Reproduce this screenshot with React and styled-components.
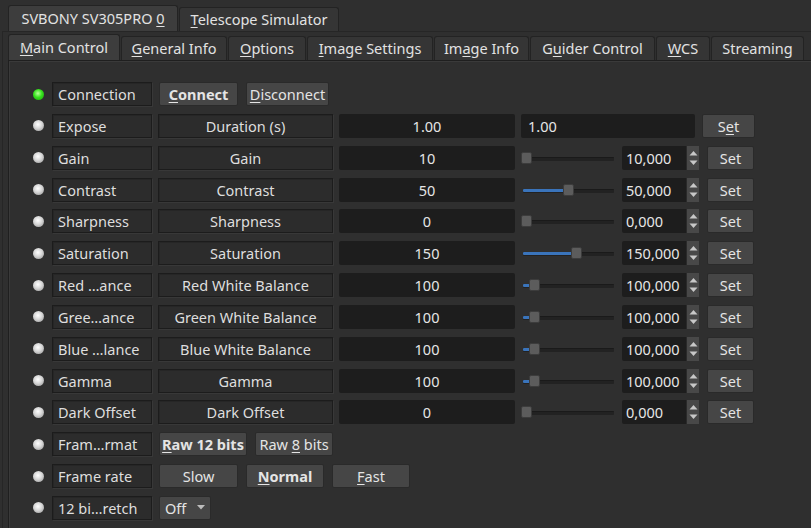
import React from 'react';
import styled, { createGlobalStyle } from 'styled-components';

const GlobalStyle = createGlobalStyle`
  html, body {
    margin: 0;
    padding: 0;
    background: #2f2f2f;
  }
  body {
    font-family: 'Noto Sans', 'Open Sans', sans-serif;
    font-size: 14.5px;
    color: #dedede;
  }
`;

const Window = styled.div`
  width: 811px;
  height: 528px;
  overflow: hidden;
  background: #2f2f2f;
  padding-top: 5px;
  box-sizing: border-box;
`;

const TabBar = styled.div`
  display: flex;
  align-items: flex-end;
  padding-left: 8px;
  height: 26px;
`;

const Tab = styled.div`
  width: ${(p) => p.$w}px;
  height: ${(p) => (p.$active ? 26 : 24)}px;
  box-sizing: border-box;
  display: flex;
  align-items: center;
  justify-content: center;
  white-space: nowrap;
  background: ${(p) => (p.$active ? '#3d3d3d' : '#353535')};
  border: 1px solid #232323;
  border-bottom: none;
  border-radius: 3px 3px 0 0;
  margin-right: 1px;
  color: #e2e2e2;
  line-height: 1;
  flex: none;
`;

const OuterPane = styled.div`
  border-left: 1px solid #262626;
  border-top: 1px solid #262626;
  margin-left: 2px;
  padding-top: 2px;
  height: 600px;
`;

const InnerTabs = styled(TabBar)`
  padding-left: 5px;
`;

const InnerPane = styled.div`
  margin-left: 5px;
  border-left: 1px solid #1f1f1f;
  border-top: 1px solid #1f1f1f;
  box-shadow: inset 1px 1px 0 #3a3a3a;
  height: 600px;
  padding: 21px 0 0 0;
`;

const Rows = styled.div`
  display: flex;
  flex-direction: column;
  gap: 7.85px;
`;

const Row = styled.div`
  display: flex;
  align-items: center;
  height: 24px;
`;

const Led = styled.span`
  width: 11px;
  height: 11px;
  border-radius: 50%;
  margin-left: 24px;
  margin-right: 8px;
  flex: none;
  background: ${(p) =>
    p.$on
      ? 'radial-gradient(circle at 45% 40%, #b8ff9a 0%, #35e21c 45%, #1a9b0c 100%)'
      : 'radial-gradient(circle at 45% 40%, #ffffff 0%, #d6d6d6 45%, #8c8c8c 100%)'};
`;

const LabelBox = styled.div`
  width: ${(p) => p.$w}px;
  height: 24px;
  box-sizing: border-box;
  border: 1px solid #1c1c1c;
  box-shadow: inset 1px 1px 0 #262626, 1px 1px 0 #383838;
  background: #2c2c2c;
  display: flex;
  align-items: center;
  justify-content: ${(p) => (p.$center ? 'center' : 'flex-start')};
  padding-left: ${(p) => (p.$center ? 0 : 5)}px;
  margin-right: ${(p) => p.$mr || 0}px;
  white-space: nowrap;
  flex: none;
`;

const Button = styled.div`
  width: ${(p) => p.$w}px;
  height: 24px;
  box-sizing: border-box;
  background: #464646;
  border: 1px solid #2a2a2a;
  border-radius: 2px;
  display: flex;
  align-items: center;
  justify-content: center;
  white-space: pre;
  font-weight: ${(p) => (p.$bold ? 700 : 400)};
  margin-left: ${(p) => p.$ml || 0}px;
  flex: none;
  color: #e4e4e4;
`;

const Field = styled.div`
  width: ${(p) => p.$w}px;
  height: 24px;
  box-sizing: border-box;
  background: #1d1d1d;
  border-radius: 2px;
  display: flex;
  align-items: center;
  justify-content: ${(p) => (p.$left ? 'flex-start' : 'center')};
  padding-left: ${(p) => (p.$left ? 7 : 0)}px;
  margin-left: ${(p) => p.$ml || 0}px;
  flex: none;
  color: #e6e6e6;
`;

const SliderWrap = styled.div`
  position: relative;
  width: 93px;
  height: 24px;
  margin-left: 6px;
  flex: none;
`;

const Groove = styled.div`
  position: absolute;
  left: 2px;
  right: 0;
  top: 11px;
  height: 3px;
  background: #222;
  border-top: 1px solid #1a1a1a;
  border-radius: 1px;
`;

const Fill = styled.div`
  position: absolute;
  left: 2px;
  top: 11px;
  height: 3px;
  background: #3a74bb;
  border-radius: 1px;
`;

const Handle = styled.div`
  position: absolute;
  top: 6px;
  width: 11px;
  height: 12px;
  background: #5c5c5c;
  border: 1px solid #3c3c3c;
  border-radius: 2px;
  box-sizing: border-box;
`;

const Spin = styled.div`
  width: 77px;
  height: 24px;
  margin-left: 8px;
  display: flex;
  background: #1d1d1d;
  border-radius: 2px;
  flex: none;
`;

const SpinText = styled.div`
  flex: 1;
  display: flex;
  align-items: center;
  padding-left: 4px;
  color: #e6e6e6;
`;

const SpinArrows = styled.div`
  width: 13px;
  background: #484848;
  border-left: 1px solid #2a2a2a;
  display: flex;
  flex-direction: column;
  align-items: center;
  justify-content: space-around;
  padding: 2px 0;
  box-sizing: border-box;
`;

const Combo = styled(Button)`
  justify-content: flex-start;
  padding-left: 5px;
  gap: 11px;
`;

const Mn = styled.span`
  text-decoration: underline;
  text-underline-offset: 2px;
`;

const Arrow = ({ up }) => (
  <svg width="9" height="6" viewBox="0 0 9 6">
    <path d={up ? 'M0.5 5.5 L4.5 1 L8.5 5.5Z' : 'M0.5 0.5 L4.5 5 L8.5 0.5Z'} fill="#c8c8c8" />
  </svg>
);

const Slider = ({ pos }) => (
  <SliderWrap>
    <Groove />
    {pos > 0 && <Fill style={{ width: pos }} />}
    <Handle style={{ left: pos }} />
  </SliderWrap>
);

const NumberRow = ({ name, label, value, slider, spin }) => (
  <Row>
    <Led />
    <LabelBox $w={100} $mr={6}>{name}</LabelBox>
    <LabelBox $w={175} $center>{label}</LabelBox>
    <Field $w={176} $ml={6}>{value}</Field>
    <Slider pos={slider} />
    <Spin>
      <SpinText>{spin}</SpinText>
      <SpinArrows>
        <Arrow up />
        <Arrow />
      </SpinArrows>
    </Spin>
    <Button $w={47} $ml={8}>Set</Button>
  </Row>
);

const props = [
  { name: 'Gain', label: 'Gain', value: '10', slider: 0, spin: '10,000' },
  { name: 'Contrast', label: 'Contrast', value: '50', slider: 42, spin: '50,000' },
  { name: 'Sharpness', label: 'Sharpness', value: '0', slider: 0, spin: '0,000' },
  { name: 'Saturation', label: 'Saturation', value: '150', slider: 50, spin: '150,000' },
  { name: 'Red …ance', label: 'Red White Balance', value: '100', slider: 8, spin: '100,000' },
  { name: 'Gree…ance', label: 'Green White Balance', value: '100', slider: 8, spin: '100,000' },
  { name: 'Blue …lance', label: 'Blue White Balance', value: '100', slider: 8, spin: '100,000' },
  { name: 'Gamma', label: 'Gamma', value: '100', slider: 8, spin: '100,000' },
  { name: 'Dark Offset', label: 'Dark Offset', value: '0', slider: 0, spin: '0,000' },
];

const App = () => (
  <Window>
    <GlobalStyle />
    <TabBar>
      <Tab $active $w={170}><span>SVBONY SV305PRO <Mn>0</Mn></span></Tab>
      <Tab $w={160}><span><Mn>T</Mn>elescope Simulator</span></Tab>
    </TabBar>
    <OuterPane>
      <InnerTabs>
        <Tab $active $w={112}><span><Mn>M</Mn>ain Control</span></Tab>
        <Tab $w={106}><span><Mn>G</Mn>eneral Info</span></Tab>
        <Tab $w={78}><span><Mn>O</Mn>ptions</span></Tab>
        <Tab $w={126}><span><Mn>I</Mn>mage Settings</span></Tab>
        <Tab $w={95}><span>Im<Mn>a</Mn>ge Info</span></Tab>
        <Tab $w={125}><span>G<Mn>u</Mn>ider Control</span></Tab>
        <Tab $w={54}><span><Mn>W</Mn>CS</span></Tab>
        <Tab $w={93}><span>Streaming</span></Tab>
      </InnerTabs>
      <InnerPane>
        <Rows>
          <Row>
            <Led $on />
            <LabelBox $w={100}>Connection</LabelBox>
            <Button $w={79} $ml={7} $bold><span><Mn>C</Mn>onnect</span></Button>
            <Button $w={83} $ml={8}><span><Mn>D</Mn>isconnect</span></Button>
          </Row>
          <Row>
            <Led />
            <LabelBox $w={100} $mr={6}>Expose</LabelBox>
            <LabelBox $w={175} $center>Duration (s)</LabelBox>
            <Field $w={176} $ml={6}>1.00</Field>
            <Field $w={174} $ml={6} $left>1.00</Field>
            <Button $w={53} $ml={7}><span>S<Mn>e</Mn>t</span></Button>
          </Row>
          {props.map((p) => (
            <NumberRow key={p.name} {...p} />
          ))}
          <Row>
            <Led />
            <LabelBox $w={100}>Fram…rmat</LabelBox>
            <Button $w={88} $ml={7} $bold><span><Mn>R</Mn>aw 12 bits</span></Button>
            <Button $w={78} $ml={8}><span>Raw <Mn>8</Mn> bits</span></Button>
          </Row>
          <Row>
            <Led />
            <LabelBox $w={100}>Frame rate</LabelBox>
            <Button $w={79} $ml={7}>Slow</Button>
            <Button $w={78} $ml={8} $bold><span><Mn>N</Mn>ormal</span></Button>
            <Button $w={78} $ml={8}><span><Mn>F</Mn>ast</span></Button>
          </Row>
          <Row>
            <Led />
            <LabelBox $w={100}>12 bi…retch</LabelBox>
            <Combo $w={52} $ml={7}>
              Off
              <svg width="8" height="5" viewBox="0 0 8 5">
                <path d="M0 0 L8 0 L4 4.5Z" fill="#bdbdbd" />
              </svg>
            </Combo>
          </Row>
        </Rows>
      </InnerPane>
    </OuterPane>
  </Window>
);

export default App;
